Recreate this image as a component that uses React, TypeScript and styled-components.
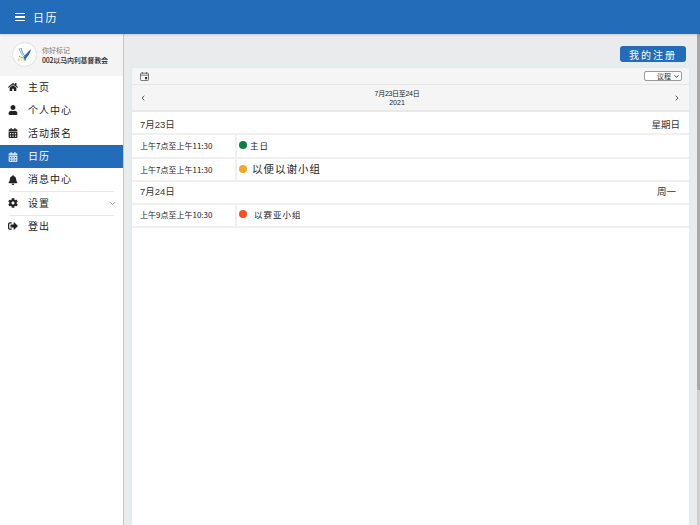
import React from 'react';
import styled, { createGlobalStyle } from 'styled-components';
import { FaHome, FaUser, FaCalendarAlt, FaBell, FaCog, FaSignOutAlt } from 'react-icons/fa';
import { LuChevronDown, LuChevronLeft, LuChevronRight } from 'react-icons/lu';

const Global = createGlobalStyle`
  html, body { margin: 0; padding: 0; height: 525px; overflow: hidden; background: #e9ebed; }
  * { box-sizing: border-box; }
  body { font-family: "Noto Sans CJK SC", "Liberation Sans", sans-serif; color: #222; }
`;
const Page = styled.div`display: flex; flex-direction: column; width: 700px; height: 525px; overflow: hidden; position: relative;`;
const TopBar = styled.header`
  height: 34px; flex: none; background: #236cb9; color: #fff; display: flex; align-items: center;
  padding-left: 15px; gap: 8px; font-size: 11px; letter-spacing: 1.5px; box-shadow: 0 1px 2px rgba(0,0,0,.15); z-index: 1;
`;
const Burger = styled.span`display: flex; flex-direction: column; gap: 2px; width: 10px;
  & > i { display: block; height: 1.5px; background: #fff; }`;
const Body = styled.div`flex: 1; display: flex; min-height: 0;`;
const Sidebar = styled.aside`width: 124px; flex: none; background: #fff; border-right: 1px solid #c4c6c8;`;
const Brand = styled.div`height: 41.5px; background: #f4f4f4; display: flex; align-items: center; padding-left: 12px; gap: 5px;`;
const Logo = styled.div`width: 25px; height: 25px; border-radius: 50%; background: #fff; border: 1px solid #e0e0e0; display: flex; align-items: center; justify-content: center;`;
const BrandText = styled.div`display: flex; flex-direction: column; line-height: 10px; padding-top: 1px;`;
const Hello = styled.span`font-size: 7px; color: #777;`;
const Church = styled.span`font-size: 7px; color: #222; font-weight: 500; white-space: nowrap; letter-spacing: -0.2px;`;
const Menu = styled.nav`display: flex; flex-direction: column;`;
const Item = styled.div<{ $active?: boolean; $rule?: boolean }>`
  height: 23.2px; display: flex; align-items: center; padding: 0 0 2px 8px; position: relative;
  background: ${p => (p.$active ? '#236cb9' : 'transparent')};
  color: ${p => (p.$active ? '#fff' : '#222')};
  font-size: 10px; letter-spacing: 1px;
  & > svg:first-child { width: 10px; height: 10px; flex: none; margin: 2px 10px 0 0; color: ${p => (p.$active ? '#cfe0f2' : '#222')}; }
  ${p => p.$rule ? `&::before { content: ''; position: absolute; left: 9px; right: 9px; top: 0; height: 1px; background: #e8e8e8; }` : ''}
`;
const Caret = styled(LuChevronDown)`position: absolute; right: 6px; top: 8px; width: 9px; height: 9px; color: #777;`;
const Main = styled.main`flex: 1; min-width: 0; display: flex; flex-direction: column; padding: 12px 9px 0 6px;`;
const Actions = styled.div`display: flex; justify-content: flex-end; padding-right: 5px; height: 20px;`;
const RegButton = styled.button`
  width: 66px; height: 16px; border: 0; border-radius: 3px; background: #236cb9; color: #fff; padding: 0;
  font: inherit; font-size: 10px; letter-spacing: 2px;
`;
const Calendar = styled.section`flex: 1; background: #fff; border: 2px solid #deeeee; border-bottom: 0; border-radius: 4px 4px 0 0; display: flex; flex-direction: column;`;
const Tools = styled.div`height: 17px; flex: none; background: #f5f5f5; border-bottom: 1px solid #e6e6e6; display: flex; align-items: center; justify-content: space-between; padding: 0 7px 0 8px;`;
const ViewSelect = styled.div`
  width: 38px; height: 10px; background: #fff; border: 1px solid #999; border-radius: 2px; font-size: 7px; line-height: 8px;
  display: flex; align-items: center; justify-content: flex-end; padding-right: 1px; gap: 2px; color: #222;
`;
const Nav = styled.div`height: 27px; flex: none; background: #f5f5f5; border-bottom: 2px solid #e8e8e8; display: flex; align-items: center; justify-content: space-between; padding: 0 8px 0 7px;`;
const Range = styled.div`display: flex; flex-direction: column; align-items: center; font-size: 7px; line-height: 9px; color: #222; margin: 0 26px 0 0; font-family: "Liberation Sans", "Noto Sans CJK SC", sans-serif;`;
const RangeTitle = styled.span`letter-spacing: -0.3px;`;
const DayHead = styled.div<{ $first?: boolean }>`height: ${p => (p.$first ? 21 : 23)}px; flex: none; display: flex; align-items: center; justify-content: space-between; padding: ${p => (p.$first ? '2px 9px 0 8px' : '0 9px 2px 8px')}; font-size: 9.5px; color: #333; font-family: "Liberation Sans", "Noto Sans CJK SC", sans-serif;`;
const Weekday = styled.span<{ $inset?: number }>`margin-right: ${p => p.$inset ?? 0}px;`;
const Row = styled.div<{ $h: number }>`height: ${p => p.$h}px; flex: none; display: flex; border-top: 2px solid #f0f0f0; border-bottom: 2px solid #f0f0f0; margin-bottom: -2px;`;
const Time = styled.div<{ $lift?: number }>`width: 105px; flex: none; border-right: 2px solid #f0f0f0; display: flex; align-items: center; padding: 0 0 ${p => p.$lift ?? 0}px 8px; font-size: 8px; color: #222; white-space: nowrap;`;
const Event = styled.div<{ $size: number; $gap: number; $lift: number }>`display: flex; align-items: center; padding: 0 0 ${p => p.$lift}px 2px; font-size: ${p => p.$size}px; letter-spacing: 1px; color: #222; gap: ${p => p.$gap}px;`;
const Dot = styled.span<{ $color: string }>`width: 8px; height: 8px; border-radius: 50%; background: ${p => p.$color}; flex: none;`;
const Scrollbar = styled.div`position: absolute; right: 0; top: 34px; bottom: 0; width: 3px; background: #d0d0d0;`;
const Thumb = styled.div`height: 356px; background: #a8a8a8;`;

export default function App() {
  return (
    <Page>
      <Global />
      <TopBar><Burger><i /><i /><i /></Burger>日历</TopBar>
      <Body>
        <Sidebar>
          <Brand>
            <Logo>
              <svg width="20" height="20" viewBox="0 0 20 20" fill="none">
                <path d="M4 3 C5 7 7 10 9 12" stroke="#7fb5e6" strokeWidth="1" />
                <path d="M6 3 C7 7 8 9 10 11" stroke="#3f8fd0" strokeWidth="1" />
                <path d="M9 12 L11 9 L16 4 C15 8 14 10 12 12 L10 16 L9 14Z" fill="#1f66b8" />
                <path d="M4 11 C6 13 8 13 9 13" stroke="#63b56b" strokeWidth="1" />
                <text x="3" y="16" fontSize="4" fill="#e6b422" fontFamily="Liberation Sans">KLC</text>
              </svg>
            </Logo>
            <BrandText><Hello>你好标记</Hello><Church>002以马内利基督教会</Church></BrandText>
          </Brand>
          <Menu>
            <Item><FaHome />主页</Item>
            <Item><FaUser />个人中心</Item>
            <Item><FaCalendarAlt />活动报名</Item>
            <Item $active><FaCalendarAlt />日历</Item>
            <Item><FaBell />消息中心</Item>
            <Item $rule><FaCog />设置<Caret /></Item>
            <Item $rule><FaSignOutAlt />登出</Item>
          </Menu>
        </Sidebar>
        <Main>
          <Actions><RegButton>我的注册</RegButton></Actions>
          <Calendar>
            <Tools>
              <svg width="9" height="9" viewBox="0 0 9 9" fill="none" stroke="#444" strokeWidth="0.7">
                <rect x="0.5" y="1.2" width="8" height="7.3" rx="0.8" />
                <path d="M0.5 3.2 H8.5 M2.4 0 V2 M6.6 0 V2" />
                <rect x="5" y="5" width="2.2" height="2.2" fill="#333" stroke="none" />
              </svg>
              <ViewSelect>议程<LuChevronDown size={7} strokeWidth={3} /></ViewSelect>
            </Tools>
            <Nav>
              <LuChevronLeft size={8} color="#333" strokeWidth={2.5} />
              <Range><RangeTitle>7月23日至24日</RangeTitle><span>2021</span></Range>
              <LuChevronRight size={8} color="#333" strokeWidth={2.5} />
            </Nav>
            <DayHead $first><span>7月23日</span><Weekday>星期日</Weekday></DayHead>
            <Row $h={26}><Time $lift={2}>上午7点至上午11:30</Time><Event $size={8.5} $gap={3} $lift={2}><Dot $color="#0b7f43" />主日</Event></Row>
            <Row $h={25}><Time>上午7点至上午11:30</Time><Event $size={10.5} $gap={5} $lift={2}><Dot $color="#f5a623" />以便以谢小组</Event></Row>
            <DayHead><span>7月24日</span><Weekday $inset={4}>周一</Weekday></DayHead>
            <Row $h={25}><Time $lift={3}>上午9点至上午10:30</Time><Event $size={8.5} $gap={7} $lift={3}><Dot $color="#f4511e" />以赛亚小组</Event></Row>
          </Calendar>
        </Main>
      </Body>
      <Scrollbar><Thumb /></Scrollbar>
    </Page>
  );
}
